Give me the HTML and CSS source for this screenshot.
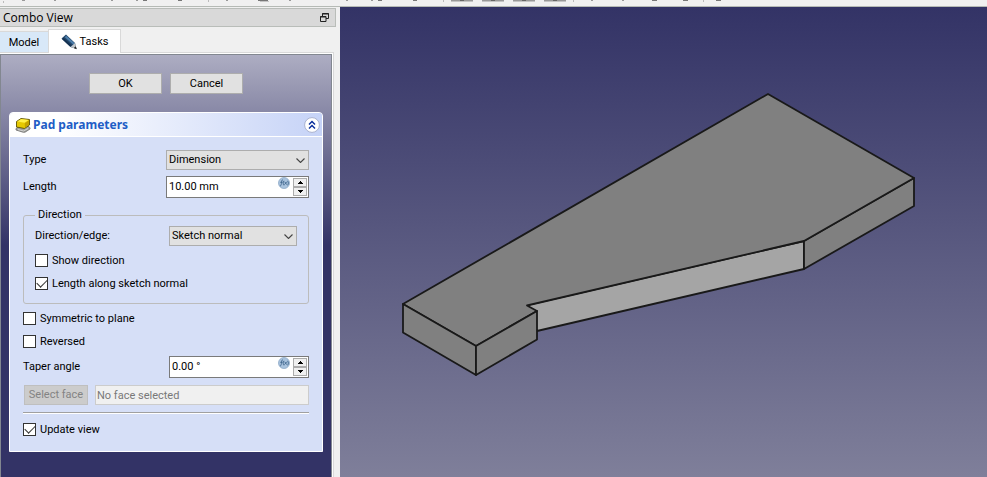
FILE: index.html
```html
<!DOCTYPE html>
<html lang="en">
<head>
<meta charset="utf-8">
<title>Pad parameters</title>
<link rel="stylesheet" href="styles.css">
</head>
<body>
<svg width="0" height="0" class="defs" aria-hidden="true">
  <defs>
    <symbol id="expr" viewBox="0 0 12 12">
      <circle cx="6" cy="6" r="5.5" fill="#a9c3de" stroke="#8da9c8" stroke-width=".8"/>
      <path d="M4.8 2.8C3.4 2.8 3.8 4.5 3.4 6.5S3 9 1.9 8.7M2.2 5.3h2.4M5.9 3.8c-1 1.6-1 3 0 4.6M6.6 4.7l2.2 3M8.9 4.7L6.4 7.7M9.6 3.8c1 1.6 1 3 0 4.6" fill="none" stroke="#42688f" stroke-width=".9"/>
    </symbol>
    <symbol id="up" viewBox="0 0 5 3"><path d="M2 0h1v1h1v1h1v1H0V2h1V1h1z" fill="#000"/></symbol>
    <symbol id="down" viewBox="0 0 5 3"><path d="M0 0h5v1H4v1H3v1H2V2H1V1H0z" fill="#000"/></symbol>
    <symbol id="chevron" viewBox="0 0 9 5"><path d="M.5.5l4 4 4-4" fill="none" stroke="#444" stroke-width="1.1"/></symbol>
  </defs>
</svg>
<header class="toolbar">
  <svg width="740" height="4" viewBox="0 0 740 4" aria-hidden="true">
    <path d="M22 0h3M54 0h2M111 0h2M136 0h2M179 0h2M226 0h2M289 0h2M346 0h2M371 0h2M414 0h2M591 0h2M622 0h2" stroke="#999" stroke-width="2"/>
    <path d="M143 0h4M178 0h4M258 0h10M378 0h4M413 0h4M652 0h5M683 0h5M716 0h5" stroke="#777" stroke-width="2"/>
    <path d="M451 0h22M482 0h22M513 0h22M544 0h22" stroke="#999" stroke-width="2"/>
    <path d="M451 1.5h22M482 1.5h22M513 1.5h22M544 1.5h22M260 1.5h9" stroke="#c4c4c4"/>
    <path d="M460 0h4M491 0h4M522 0h4M553 0h4" stroke="#666" stroke-width="2"/>
    <path d="M208.5 0v2M443.5 0v2M573.5 0v2M703.5 0v2M3.5 1v2" stroke="#bbb"/>
  </svg>
</header>
<main class="workspace">
  <aside class="dock">
    <div class="dock-title">
      <span>Combo View</span>
      <button class="float-btn" aria-label="Float panel">
        <svg width="9" height="9" viewBox="0 0 9 9"><path d="M2.5 3V.5h6v5H6M2 1h7M.5 3.500h5.500v5H.5zM0 4h6" fill="none" stroke="#222"/></svg>
      </button>
    </div>
    <nav class="tabs">
      <button class="tab">Model</button>
      <button class="tab active">
        <svg width="16" height="16" viewBox="0 0 16 16" aria-hidden="true">
          <path d="M.5 4.500L5 .5l9 8.500 1.500 6L9.500 13z" fill="#24486c"/>
          <path d="M1.800 4.500l8.200 7.500" stroke="#153252" stroke-width="2"/>
          <path d="M4.500 2.500l8.500 7.500" stroke="#4d7fac" stroke-width="2"/>
          <path d="M9.500 13l4.500-4 1.500 6z" fill="#c0c5c9"/>
          <path d="M12.800 14l1.900-1.700 1 3z" fill="#222"/>
        </svg>
        Tasks
      </button>
    </nav>
    <div class="pane">
      <div class="taskview">
        <div class="actions">
          <button class="btn">OK</button>
          <button class="btn">Cancel</button>
        </div>
        <section class="group">
          <header class="group-head">
            <svg width="16" height="16" viewBox="0 0 16 16" aria-hidden="true">
              <path d="M1 11.500l2-1.500 11-.5 1 1.500v1l-5 3.200H8L1 13z" fill="#a2a49f" stroke="#6b6b6b" stroke-width=".8"/>
              <path d="M3 12.500l5.500 1.500 4.500-2.500" fill="none" stroke="#ddd" stroke-width=".8"/>
              <path d="M1.500 4.500L6 1.500l8.500 1V8L9.500 11.500 1.500 10z" fill="#e6c900" stroke="#5e5200" stroke-width=".9"/>
              <path d="M2.300 4.600L6.200 2l7.500.9-4.200 2.800z" fill="#fff04a"/>
              <path d="M9.800 6.200l4.200-3v4.600l-4.200 3z" fill="#c4a300"/>
            </svg>
            <h2>Pad parameters</h2>
            <button class="fold" aria-label="Collapse">
              <svg width="16" height="16" viewBox="0 0 16 16"><circle cx="8" cy="8" r="7.400" fill="#fff" stroke="#a9b2cf"/><path d="M5 7.500l3-3 3 3M5 11.500l3-3 3 3" fill="none" stroke="#0a2f9c" stroke-width="1.500"/></svg>
            </button>
          </header>
          <form class="group-body">
            <div class="row">
              <label for="type">Type</label>
              <div class="select wide"><select id="type"><option>Dimension</option></select><svg width="9" height="5"><use href="#chevron"/></svg></div>
            </div>
            <div class="row spin-row">
              <label for="length">Length</label>
              <div class="spin wide">
                <input id="length" type="text" value="10.00 mm">
                <svg class="expr" width="12" height="12"><use href="#expr"/></svg>
                <span class="steps"><button type="button" aria-label="Increase length"><svg width="5" height="3"><use href="#up"/></svg></button><button type="button" aria-label="Decrease length"><svg width="5" height="3"><use href="#down"/></svg></button></span>
              </div>
            </div>
            <fieldset>
              <legend>Direction</legend>
              <div class="row">
                <label for="edge">Direction/edge:</label>
                <div class="select"><select id="edge"><option>Sketch normal</option></select><svg width="9" height="5"><use href="#chevron"/></svg></div>
              </div>
              <label class="check"><input type="checkbox">Show direction</label>
              <label class="check"><input type="checkbox" checked>Length along sketch normal</label>
            </fieldset>
            <label class="check"><input type="checkbox">Symmetric to plane</label>
            <label class="check"><input type="checkbox">Reversed</label>
            <div class="row taper">
              <label for="taper">Taper angle</label>
              <div class="spin">
                <input id="taper" type="text" value="0.00 °">
                <svg class="expr" width="12" height="12"><use href="#expr"/></svg>
                <span class="steps"><button type="button" aria-label="Increase angle"><svg width="5" height="3"><use href="#up"/></svg></button><button type="button" aria-label="Decrease angle"><svg width="5" height="3"><use href="#down"/></svg></button></span>
              </div>
            </div>
            <div class="face">
              <button type="button" class="btn" disabled>Select face</button>
              <input type="text" value="No face selected" aria-label="Selected face" disabled>
            </div>
            <hr>
            <label class="check"><input type="checkbox" checked>Update view</label>
          </form>
        </section>
      </div>
    </div>
  </aside>
  <section class="viewport" aria-label="3D view">
    <svg viewBox="0 0 647 470" preserveAspectRatio="xMidYMid meet">
      <g stroke="#191919" stroke-width="1.800" stroke-linejoin="round">
        <path d="M187 298L464 234V262L197 324z" fill="#a5a5a5"/>
        <path d="M464 234L574 171V199L464 262z" fill="#808080"/>
        <path d="M63 297L428 87 574 171 464 234 187 298.500 197 304 136 339z" fill="#808080"/>
        <path d="M63 297L136 339V368L63 325.500z" fill="#808080"/>
        <path d="M136 339L197 304V332.500L136 368z" fill="#808080"/>
      </g>
    </svg>
  </section>
</main>
</body>
</html>
```

FILE: styles.css
```css
* { box-sizing: border-box; }

body {
  margin: 0;
  height: 100vh;
  display: flex;
  flex-direction: column;
  overflow: hidden;
  background: #f0f0f0;
  color: #000;
  font: 11px/14px Roboto, "Liberation Sans", sans-serif;
}

button, input, select { font: inherit; color: inherit; margin: 0; }
button { padding: 0; border: 0; background: none; }
svg { display: block; flex: none; }
.defs { position: absolute; }

.toolbar { height: 7px; flex: none; overflow: hidden; border-bottom: 1px solid #b5bab5; }

.workspace { flex: 1; display: flex; min-height: 0; }

.dock { width: 340px; flex: none; display: flex; flex-direction: column; padding-top: 1px; }

.dock-title {
  height: 19px;
  margin-right: 4px;
  padding: 0 6px 0 3px;
  display: flex;
  align-items: center;
  justify-content: space-between;
  background: #d9d9d9;
  border: 1px solid #b9bdb9;
  border-left: 0;
  font: 12px/16px "Open Sans", sans-serif;
}

.tabs { display: flex; align-items: flex-end; height: 25px; }
.tab {
  height: 21px;
  width: 48px;
  padding-top: 2px;
  background: #d8e8f8;
  border: 1px solid #d9d9d9;
  border-width: 1px 0 0;
}
.tab.active {
  position: relative;
  width: 73px;
  height: 24px;
  margin-bottom: -1px;
  padding: 0;
  display: flex;
  align-items: center;
  justify-content: center;
  gap: 3px;
  background: #fff;
  border-width: 1px 1px 0;
}

.pane {
  flex: 1;
  min-height: 0;
  margin-right: 6px;
  padding: 1px 1px 0 0;
  background: #fff;
  border: 1px solid #d9d9d9;
  border-width: 1px 1px 0 0;
}
.taskview {
  height: 100%;
  padding: 18px 8px 0;
  border: 1px solid #828790;
  border-bottom: 0;
  background: linear-gradient(#adadc2, #333366 190px);
}

.actions { display: flex; justify-content: center; gap: 8px; margin-bottom: 18px; }
.btn { height: 21px; width: 73px; background: #e1e1e1; border: 1px solid #adadad; }

.group { border-radius: 4px 4px 0 0; border: 1px solid #fff; background: #d6dff7; }
.group-head {
  height: 24px;
  padding: 0 2px 0 5px;
  display: flex;
  align-items: center;
  gap: 2px;
  border-bottom: 1px solid #fff;
  border-radius: 3px 3px 0 0;
  background: linear-gradient(90deg, #fff 15%, #c6d3f7);
}
.group-head h2 { flex: 1; margin: 0; color: #215dc6; font: bold 12px/14px "Noto Sans", sans-serif; }

.group-body { padding: 13px 13px 15px; }

.row { display: flex; align-items: center; justify-content: space-between; }
.spin-row { margin-top: 6px; }

.select { position: relative; width: 128px; height: 20px; }
.select.wide, .spin.wide { width: 143px; }
.select select {
  display: block;
  width: 100%;
  height: 100%;
  padding: 0 20px 0 2px;
  appearance: none;
  background: #e1e1e1;
  border: 1px solid #adadad;
  border-radius: 0;
}
.select svg { position: absolute; right: 4px; top: 8px; pointer-events: none; }

.spin {
  width: 140px;
  height: 22px;
  display: flex;
  background: #fff;
  border: 1px solid #7a7a7a;
}
.spin input { flex: 1; min-width: 0; padding: 0 2px; border: 0; background: none; }
.expr { margin: 0 3px 0 0; }
.steps { width: 14px; margin: 1px 1px 1px 0; display: flex; flex-direction: column; }
.steps button {
  flex: 1;
  display: flex;
  align-items: center;
  justify-content: center;
  background: #f0f0f0;
  border: 1px solid #acacac;
}

fieldset {
  min-width: 0;
  margin: 10px 0 8px;
  padding: 4px 11px 13px;
  border: 1px solid #bcbcbc;
  border-radius: 3px;
}
legend { padding: 0 3px; }
fieldset .check { margin-top: 8px; }
fieldset .check + .check { margin-top: 10px; }

.check { display: flex; align-items: center; gap: 4px; height: 13px; }
.check + .check { margin-top: 10px; }
.check input {
  flex: none;
  width: 13px;
  height: 13px;
  appearance: none;
  display: grid;
  place-items: center;
  background: #fff;
  border: 1px solid #333;
}
.check input:checked::before {
  content: "";
  width: 9px;
  height: 5px;
  margin-bottom: 3px;
  border: solid #333;
  border-width: 0 0 1px 1px;
  transform: rotate(-45deg);
}

.taper { margin-top: 8px; }

.face { display: flex; gap: 7px; margin: 7px 0 7px 1px; }
.face .btn { width: 64px; height: 20px; flex: none; background: #ccc; border-color: #bfbfbf; color: #838383; }
.face input {
  flex: 1;
  min-width: 0;
  height: 20px;
  padding: 0 1px;
  background: #f0f0f0;
  border: 1px solid #ccc;
  color: #787878;
}
hr { height: 2px; margin: 0 0 9px; border: 0; border-top: 1px solid #a0a0a0; border-bottom: 1px solid #fff; }

.viewport { flex: 1; min-width: 0; background: linear-gradient(#333366, #7f7f9a); }
.viewport svg { width: 100%; height: 100%; }
```
